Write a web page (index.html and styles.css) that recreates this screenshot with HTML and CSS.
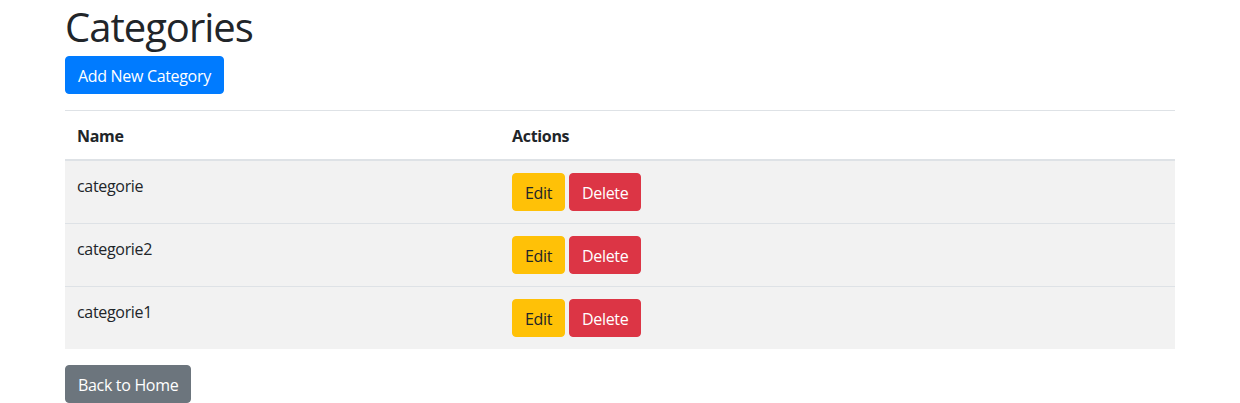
FILE: index.html
```html
<!DOCTYPE html>
<html lang="en">
<head>
<meta charset="utf-8">
<title>Categories</title>
<link rel="stylesheet" href="styles.css">
</head>
<body>
<div class="container">
  <h1 class="title">Categories</h1>
  <a class="btn btn-primary" href="#">Add New Category</a>
  <table class="table">
    <thead>
      <tr>
        <th class="col-name">Name</th>
        <th>Actions</th>
      </tr>
    </thead>
    <tbody>
      <tr>
        <td>categorie</td>
        <td><a class="btn btn-warning" href="#">Edit</a> <button class="btn btn-danger">Delete</button></td>
      </tr>
      <tr>
        <td>categorie2</td>
        <td><a class="btn btn-warning" href="#">Edit</a> <button class="btn btn-danger">Delete</button></td>
      </tr>
      <tr>
        <td>categorie1</td>
        <td><a class="btn btn-warning" href="#">Edit</a> <button class="btn btn-danger">Delete</button></td>
      </tr>
    </tbody>
  </table>
  <a class="btn btn-secondary" href="#">Back to Home</a>
</div>
</body>
</html>
```
FILE: styles.css
```css
* { box-sizing: border-box; }
html, body { margin: 0; padding: 0; }
body {
  font-family: "Open Sans", "Noto Sans", "Liberation Sans", sans-serif;
  font-size: 16px;
  line-height: 1.5;
  letter-spacing: -0.02em;
  color: #212529;
  background: #fff;
}
.container {
  max-width: 1140px;
  margin: 0 auto;
  padding: 0 15px;
}
.title {
  font-size: 40px;
  font-weight: 400;
  line-height: 1.2;
  letter-spacing: -0.025em;
  padding-top: 3px;
  margin: 0 0 5px;
}
.btn {
  display: inline-block;
  font-family: inherit;
  font-size: 16px;
  line-height: 1.5;
  letter-spacing: inherit;
  padding: 7px 12px 5px;
  border: 1px solid transparent;
  border-radius: 4px;
  text-decoration: none;
  vertical-align: middle;
  cursor: pointer;
}
.btn-primary { background: #007bff; border-color: #007bff; color: #fff; }
.btn-warning { background: #ffc107; border-color: #ffc107; color: #212529; }
.btn-danger { background: #dc3545; border-color: #dc3545; color: #fff; }
.btn-secondary { background: #6c757d; border-color: #6c757d; color: #fff; }
.table {
  width: 100%;
  margin: 16px 0;
  border-collapse: collapse;
}
.table th, .table td {
  padding: 13px 12px 11px;
  text-align: left;
  vertical-align: top;
  border-top: 1px solid #dee2e6;
}
.table td:last-child { padding-top: 12px; padding-bottom: 12px; }
.table thead th {
  vertical-align: bottom;
  border-bottom: 2px solid #dee2e6;
  font-weight: 700;
}
.table tbody tr { background: #f2f2f2; }
.col-name { width: 435px; }
```
